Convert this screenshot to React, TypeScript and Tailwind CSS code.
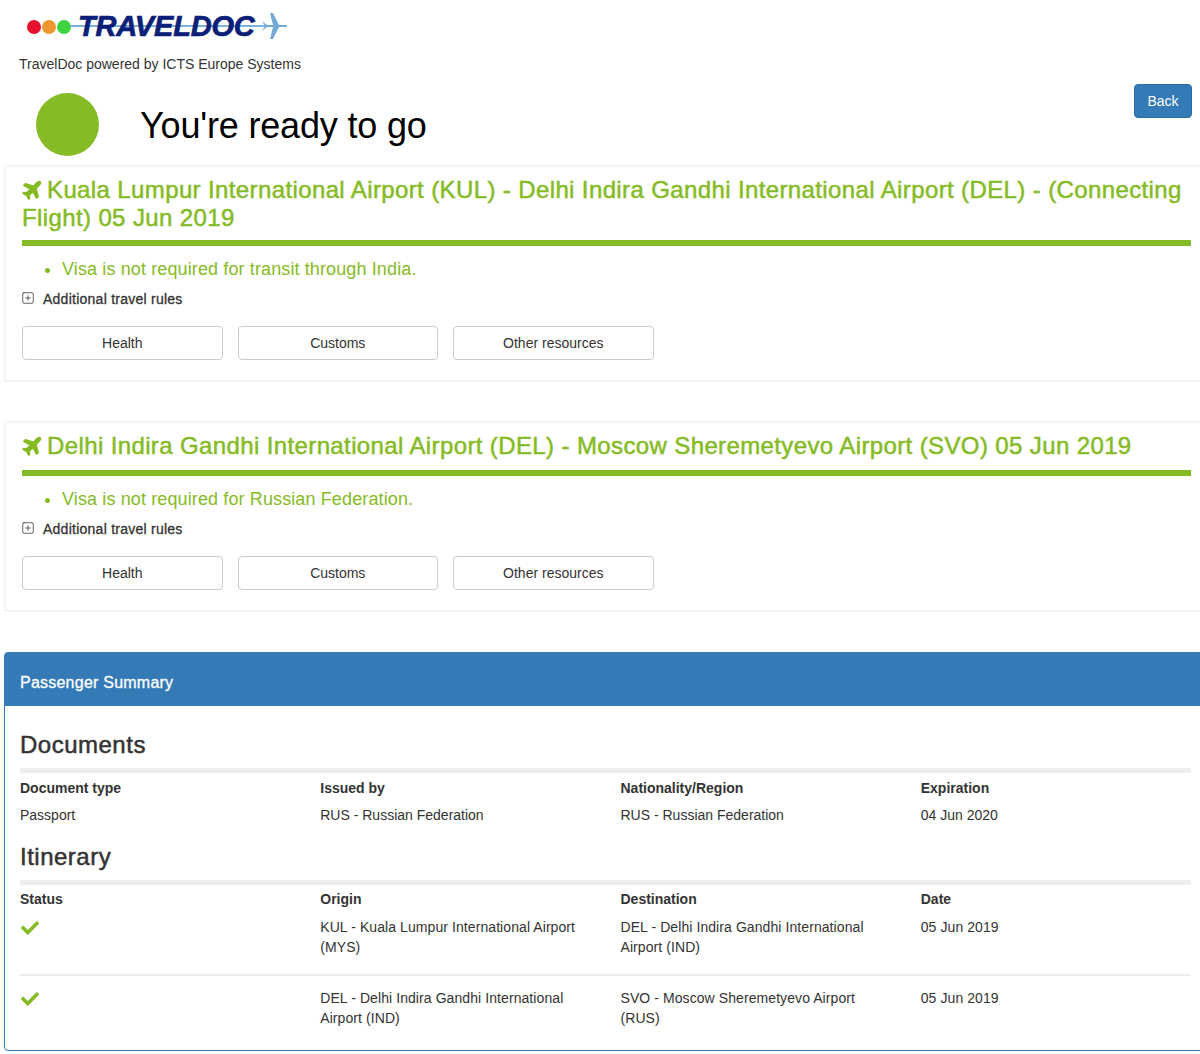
import React from 'react';
import { FaPlane, FaCheck } from 'react-icons/fa';
import { SquarePlus } from 'lucide-react';

const FONT = "font-['Liberation_Sans',Arial,sans-serif]";

const Logo = () => (
    <div className="relative h-[45px] w-[300px]">
        <div className="absolute left-[27px] top-[20px] flex gap-[1px]">
            <span className="h-[14px] w-[14px] rounded-full bg-[#e8112d]" />
            <span className="h-[14px] w-[14px] rounded-full bg-[#f0962e]" />
            <span className="h-[14px] w-[14px] rounded-full bg-[#3fd43f]" />
        </div>
        <div className="absolute left-[70px] top-[25px] h-[2px] w-[216px] bg-[#7fb0dc]" />
        <svg className="absolute left-[261px] top-[13px]" width="27" height="26" viewBox="0 0 27 26">
            <path d="M1 8l3 5-3 5 5-4h6l-3 12h3l6-12h8v-2h-8L12 0H9l3 12H6z" fill="#74a9d8" />
        </svg>
        <span className="absolute left-[78px] top-[8px] text-[29px] leading-[36px] font-bold italic tracking-[-0.2px] text-[#0a2078] [-webkit-text-stroke:0.7px_#0a2078]">
            TRAVELDOC
        </span>
    </div>
);

const SegmentCard = ({ title, note, barGap }: { title: string; note: string; barGap: string }) => (
    <div className="ml-1 w-[1210px] border-2 border-[#f5f5f5] pl-4 pr-[21px] pt-[9px] pb-[20px]">
        <h3 className="text-[24px] leading-[28px] tracking-[0.38px] text-[#85bb25] [-webkit-text-stroke:0.5px_#85bb25]">
            <FaPlane className="mr-[3px] inline-block -rotate-45 align-[-2px] text-[22px]" />
            {title}
        </h3>
        <div className={`${barGap} h-[6px] bg-[#85bb25]`} />
        <ul className="mt-[12px] list-disc pl-10 text-[18px] leading-[22px] tracking-[0.12px] text-[#85bb25]">
            <li>{note}</li>
        </ul>
        <div className="mt-[9px] flex items-center text-[14px] leading-[20px] tracking-[0.25px] text-[#333] [-webkit-text-stroke:0.3px_#333]">
            <SquarePlus size={14} strokeWidth={1.3} className="mb-[3px] -ml-[1px]" />
            <span className="ml-[8px]">Additional travel rules</span>
        </div>
        <div className="mt-[17px] flex gap-[15px]">
            {['Health', 'Customs', 'Other resources'].map((label) => (
                <button
                    key={label}
                    className="h-[34px] w-[200.5px] rounded border border-[#ccc] bg-white text-[14px] text-[#333]"
                >
                    {label}
                </button>
            ))}
        </div>
    </div>
);

const ColumnLabels = ({ labels }: { labels: string[] }) => (
    <div className="mr-[-30px] grid grid-cols-4 text-[14px] leading-[20px] font-bold text-[#333]">
        {labels.map((label) => (
            <div key={label}>{label}</div>
        ))}
    </div>
);

const SectionTitle = ({ children }: { children: React.ReactNode }) => (
    <>
        <h3 className="text-[24px] leading-[26px] tracking-[0.5px] text-[#333] [-webkit-text-stroke:0.5px_#333]">{children}</h3>
        <div className="mt-[10px] h-[5px] bg-[#eee]" />
    </>
);

const ItineraryRow = ({ origin, destination, date }: { origin: string; destination: string; date: string }) => (
    <div className="mr-[-30px] grid grid-cols-4 text-[14px] leading-[20px] tracking-[0.08px] text-[#333]">
        <div className="pl-[1px] pt-[2px]">
            <FaCheck className="text-[18px] text-[#85bb25]" />
        </div>
        <div className="pr-[30px]">{origin}</div>
        <div className="pr-[30px]">{destination}</div>
        <div>{date}</div>
    </div>
);

export default function App() {
    return (
        <div className={`${FONT} h-[1054px] w-[1200px] overflow-hidden bg-white`}>
            <Logo />
            <p className="mt-[9px] ml-[19px] text-[14px] leading-[20px] text-[#333]">
                TravelDoc powered by ICTS Europe Systems
            </p>

            <div className="relative flex h-[91px] items-start pl-[36px] pt-[19px]">
                <div className="h-[63px] w-[63px] rounded-full bg-[#85bb25]" />
                <h1 className="ml-[41px] mt-[13px] text-[36px] leading-[40px] tracking-[-0.17px] text-black">You're ready to go</h1>
                <button className="absolute right-[8px] top-[10px] h-[34px] w-[58px] rounded border border-[#2e6da4] bg-[#337ab7] text-[14px] text-white">
                    Back
                </button>
            </div>

            <SegmentCard
                title="Kuala Lumpur International Airport (KUL) - Delhi Indira Gandhi International Airport (DEL) - (Connecting Flight) 05 Jun 2019"
                note="Visa is not required for transit through India."
                barGap="mt-[8px]"
            />
            <div className="h-[39px]" />
            <SegmentCard
                title="Delhi Indira Gandhi International Airport (DEL) - Moscow Sheremetyevo Airport (SVO) 05 Jun 2019"
                note="Visa is not required for Russian Federation."
                barGap="mt-[10px]"
            />
            <div className="h-[40px]" />

            <div className="ml-1 h-[399px] w-[1203px] rounded border border-[#337ab7]">
                <div className="flex h-[53px] items-center bg-[#337ab7] px-[15px] pt-[6px] text-[16px] tracking-[0.23px] text-white [-webkit-text-stroke:0.3px_#fff]">
                    Passenger Summary
                </div>
                <div className="pl-[15px] pr-[15px] pt-[26px]">
                    <SectionTitle>Documents</SectionTitle>
                    <div className="mt-[5px]">
                        <ColumnLabels labels={['Document type', 'Issued by', 'Nationality/Region', 'Expiration']} />
                    </div>
                    <div className="mt-[7px] mr-[-30px] grid grid-cols-4 text-[14px] leading-[20px] text-[#333]">
                        <div>Passport</div>
                        <div>RUS - Russian Federation</div>
                        <div>RUS - Russian Federation</div>
                        <div>04 Jun 2020</div>
                    </div>
                    <div className="mt-[19px]">
                        <SectionTitle>Itinerary</SectionTitle>
                    </div>
                    <div className="mt-[4px]">
                        <ColumnLabels labels={['Status', 'Origin', 'Destination', 'Date']} />
                    </div>
                    <div className="mt-[8px]">
                        <ItineraryRow
                            origin="KUL - Kuala Lumpur International Airport (MYS)"
                            destination="DEL - Delhi Indira Gandhi International Airport (IND)"
                            date="05 Jun 2019"
                        />
                    </div>
                    <div className="mt-[17px] h-[2px] bg-[#eee]" />
                    <div className="mt-[12px]">
                        <ItineraryRow
                            origin="DEL - Delhi Indira Gandhi International Airport (IND)"
                            destination="SVO - Moscow Sheremetyevo Airport (RUS)"
                            date="05 Jun 2019"
                        />
                    </div>
                </div>
            </div>
        </div>
    );
}
